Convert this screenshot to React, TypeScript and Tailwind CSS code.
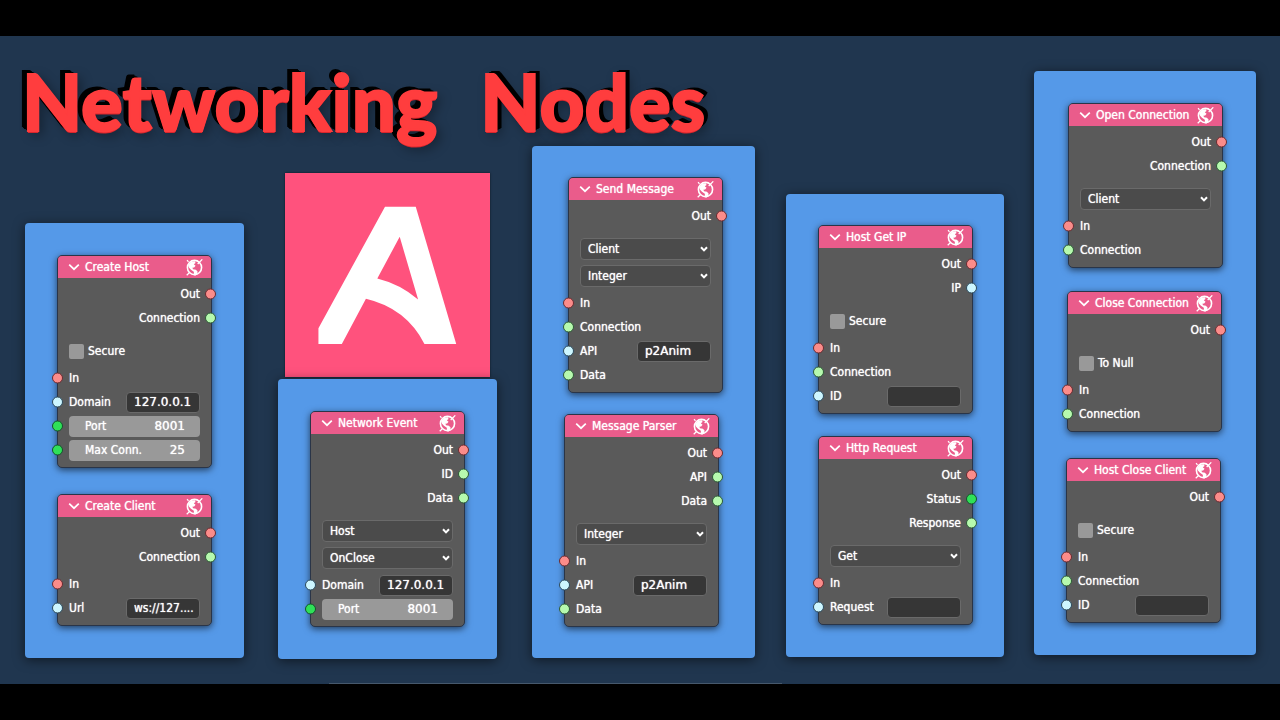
import { useId, type ReactNode } from "react";

type Tone = "flow" | "any" | "text" | "int";

const toneClass: Record<Tone, string> = {
  flow: "bg-[#fb8c8a] border-[#6b2a30]",
  any: "bg-[#b6f9ae] border-[#2c5a35]",
  text: "bg-[#cdf6ff] border-[#2c4a5c]",
  int: "bg-[#2fe058] border-[#14532b]",
};

function Socket({ tone, side }: { tone: Tone; side: "left" | "right" }) {
  const place = side === "left" ? "-left-[17px]" : "-right-4";
  return (
    <span
      className={`absolute top-1/2 size-[11px] -translate-y-1/2 rounded-full border ${place} ${toneClass[tone]}`}
    />
  );
}

function Output({ tone, children }: { tone: Tone; children: ReactNode }) {
  return (
    <li className="relative flex h-6 items-center justify-end">
      {children}
      <Socket tone={tone} side="right" />
    </li>
  );
}

function Input({ tone, children }: { tone: Tone; children: ReactNode }) {
  return (
    <li className="relative flex h-6 items-center">
      <Socket tone={tone} side="left" />
      {children}
    </li>
  );
}

function TextInput({ tone, label, value }: { tone: Tone; label: string; value: string }) {
  const id = useId();
  return (
    <li className="relative flex h-6 items-center justify-between">
      <Socket tone={tone} side="left" />
      <label htmlFor={id}>{label}</label>
      <input
        id={id}
        type="text"
        defaultValue={value}
        className={`h-[21px] w-[74px] rounded-[4px] border border-[#6a6a6a] bg-[#363636] pl-[7px] outline-none [text-shadow:inherit] ${
          value.startsWith("ws") ? "" : "font-['DejaVu_Sans',sans-serif]"
        }`}
      />
    </li>
  );
}

function NumberInput({ label, value }: { label: string; value: string }) {
  const id = useId();
  return (
    <li className="relative flex h-6 items-center">
      <Socket tone="int" side="left" />
      <span className="flex h-[21px] w-full items-center justify-between rounded-[4px] bg-[#999] pr-[15px] pl-4">
        <label htmlFor={id}>{label}</label>
        <input
          id={id}
          type="text"
          inputMode="numeric"
          defaultValue={value}
          className="w-9 bg-transparent text-right font-['DejaVu_Sans',sans-serif] outline-none [text-shadow:inherit]"
        />
      </span>
    </li>
  );
}

function Choice({ label, options }: { label: string; options: string[] }) {
  return (
    <div className="relative flex h-6 items-center">
      <select
        aria-label={label}
        className="h-[22px] w-full appearance-none rounded-[4px] border border-[#6a6a6a] bg-[#4b4b4b] pl-[7px] outline-none [text-shadow:inherit]"
      >
        {options.map((option) => (
          <option key={option}>{option}</option>
        ))}
      </select>
      <svg
        viewBox="0 0 8 6"
        className="pointer-events-none absolute right-[3px] h-[6px] w-2 fill-none stroke-white stroke-2"
      >
        <path d="M1 1.2 4 4.4 7 1.2" />
      </svg>
    </div>
  );
}

function Check({ label }: { label: string }) {
  return (
    <label className="flex h-6 items-center gap-1">
      <input type="checkbox" className="size-[15px] appearance-none rounded-[2px] bg-[#999]" />
      {label}
    </label>
  );
}

function Globe() {
  return (
    <svg viewBox="0 0 48 48" className="size-[17px] fill-none stroke-white">
      <circle cx="24" cy="24" r="20" strokeWidth="4.5" />
      <path
        fill="#fff"
        stroke="none"
        d="M6 17 14 8l11-2 2 5-5 4 5 4-4 5-5 1 2 4 8 1 5 6-2 6-5 5-3-2-1-9-8-6-6-6Z"
      />
      <path strokeWidth="3.5" d="M33 14 46 1M10 38 2 46M3 3 7 8" />
    </svg>
  );
}

interface NodeProps {
  title: string;
  place: string;
  outputs: ReactNode;
  options?: ReactNode;
  inputs?: ReactNode;
}

function Node({ title, place, outputs, options, inputs }: NodeProps) {
  return (
    <article
      className={`absolute w-[155px] rounded-[5px] border border-[#2a3548] bg-[#5a5a5a] shadow-[0_2px_7px_rgba(0,0,0,0.6)] ${place}`}
    >
      <header className="flex h-[22px] items-center rounded-t-[4px] bg-[#ea5c8b] pr-2 pl-[10px]">
        <button type="button" aria-label={`Collapse ${title}`} className="w-[17px]">
          <svg viewBox="0 0 12 8" className="h-2 w-3 fill-none stroke-white stroke-[1.7]">
            <path d="M1.2 1.6 6 6.2l4.8-4.6" />
          </svg>
        </button>
        <h2 className="flex-1 whitespace-nowrap">{title}</h2>
        <Globe />
      </header>
      <div className="px-[11px] pt-1 pb-[5px]">
        <ul>{outputs}</ul>
        {options && <div className="mt-[9px] flex flex-col gap-[3px]">{options}</div>}
        {inputs && <ul className="mt-[3px]">{inputs}</ul>}
      </div>
    </article>
  );
}

function Frame({ place }: { place: string }) {
  return (
    <div
      className={`absolute rounded-[4px] bg-[#5599e8] shadow-[0_2px_12px_rgba(0,0,0,0.55)] ${place}`}
    />
  );
}

function Logo() {
  return (
    <svg
      viewBox="0 0 613 611"
      preserveAspectRatio="none"
      role="img"
      aria-label="A"
      className="absolute top-[137px] left-[285px] h-[204px] w-[205px] bg-[#ff527d] shadow-[0_0_2px_rgba(0,0,0,0.6)]"
    >
      <path
        fill="#fff"
        fillRule="evenodd"
        d="M299 101H391L512 512H417Q362 405 242 377L170 512H100V465ZM343 191 276 316Q345 333 398 379Z"
      />
    </svg>
  );
}

export default function App() {
  return (
    <div className="flex min-h-screen flex-col bg-black py-9">
      <main className="relative min-h-[648px] flex-1 overflow-hidden bg-[#20364f] font-['DejaVu_Sans_Condensed','DejaVu_Sans',sans-serif] text-xs text-white [text-shadow:0_0_1px_#fff]">
        <h1 className="absolute top-[26px] left-[22px] flex gap-[43px] font-['Lato',sans-serif] text-[78px] leading-none font-black whitespace-nowrap text-[#ff3d3e] [-webkit-text-stroke:2px_#ff3d3e]">
          <span className="[text-shadow:0_1px_0_#e02b30,0_2px_0_#d9262c,-1px_0_0_#000,-2px_-1px_0_#000,-3px_-2px_0_#000,-4px_-2px_0_#000,-5px_-3px_0_#000,-6px_-4px_0_#000,4px_4px_12px_rgba(0,0,0,0.4)]">
            Networking
          </span>
          <span className="[text-shadow:0_1px_0_#e02b30,0_2px_0_#d9262c,1px_-1px_0_#000,2px_-1px_0_#000,3px_-2px_0_#000,4px_-2px_0_#000,5px_-3px_0_#000,4px_4px_12px_rgba(0,0,0,0.4)]">
            Nodes
          </span>
        </h1>

        <Logo />

        <Frame place="left-[25px] top-[187px] h-[435px] w-[219px]" />
        <Frame place="left-[278px] top-[343px] h-[280px] w-[219px]" />
        <Frame place="left-[532px] top-[110px] h-[512px] w-[223px]" />
        <Frame place="left-[786px] top-[158px] h-[463px] w-[218px]" />
        <Frame place="left-[1034px] top-[35px] h-[584px] w-[222px]" />

        <Node
          title="Create Host"
          place="left-[57px] top-[219px]"
          outputs={
            <>
              <Output tone="flow">Out</Output>
              <Output tone="any">Connection</Output>
            </>
          }
          options={<Check label="Secure" />}
          inputs={
            <>
              <Input tone="flow">In</Input>
              <TextInput tone="text" label="Domain" value="127.0.0.1" />
              <NumberInput label="Port" value="8001" />
              <NumberInput label="Max Conn." value="25" />
            </>
          }
        />
        <Node
          title="Create Client"
          place="left-[57px] top-[458px]"
          outputs={
            <>
              <Output tone="flow">Out</Output>
              <Output tone="any">Connection</Output>
            </>
          }
          inputs={
            <>
              <Input tone="flow">In</Input>
              <TextInput tone="text" label="Url" value="ws://127...." />
            </>
          }
        />
        <Node
          title="Network Event"
          place="left-[310px] top-[375px]"
          outputs={
            <>
              <Output tone="flow">Out</Output>
              <Output tone="any">ID</Output>
              <Output tone="any">Data</Output>
            </>
          }
          options={
            <>
              <Choice label="Side" options={["Host", "Client"]} />
              <Choice label="Event" options={["OnClose", "OnOpen"]} />
            </>
          }
          inputs={
            <>
              <TextInput tone="text" label="Domain" value="127.0.0.1" />
              <NumberInput label="Port" value="8001" />
            </>
          }
        />
        <Node
          title="Send Message"
          place="left-[568px] top-[141px]"
          outputs={<Output tone="flow">Out</Output>}
          options={
            <>
              <Choice label="Side" options={["Client", "Host"]} />
              <Choice label="Data type" options={["Integer", "Float"]} />
            </>
          }
          inputs={
            <>
              <Input tone="flow">In</Input>
              <Input tone="any">Connection</Input>
              <TextInput tone="text" label="API" value="p2Anim" />
              <Input tone="any">Data</Input>
            </>
          }
        />
        <Node
          title="Message Parser"
          place="left-[564px] top-[378px]"
          outputs={
            <>
              <Output tone="flow">Out</Output>
              <Output tone="any">API</Output>
              <Output tone="any">Data</Output>
            </>
          }
          options={<Choice label="Data type" options={["Integer", "Float"]} />}
          inputs={
            <>
              <Input tone="flow">In</Input>
              <TextInput tone="text" label="API" value="p2Anim" />
              <Input tone="any">Data</Input>
            </>
          }
        />
        <Node
          title="Host Get IP"
          place="left-[818px] top-[189px]"
          outputs={
            <>
              <Output tone="flow">Out</Output>
              <Output tone="text">IP</Output>
            </>
          }
          options={<Check label="Secure" />}
          inputs={
            <>
              <Input tone="flow">In</Input>
              <Input tone="any">Connection</Input>
              <TextInput tone="text" label="ID" value="" />
            </>
          }
        />
        <Node
          title="Http Request"
          place="left-[818px] top-[400px]"
          outputs={
            <>
              <Output tone="flow">Out</Output>
              <Output tone="int">Status</Output>
              <Output tone="any">Response</Output>
            </>
          }
          options={<Choice label="Method" options={["Get", "Post"]} />}
          inputs={
            <>
              <Input tone="flow">In</Input>
              <TextInput tone="text" label="Request" value="" />
            </>
          }
        />
        <Node
          title="Open Connection"
          place="left-[1068px] top-[67px]"
          outputs={
            <>
              <Output tone="flow">Out</Output>
              <Output tone="any">Connection</Output>
            </>
          }
          options={<Choice label="Side" options={["Client", "Host"]} />}
          inputs={
            <>
              <Input tone="flow">In</Input>
              <Input tone="any">Connection</Input>
            </>
          }
        />
        <Node
          title="Close Connection"
          place="left-[1067px] top-[255px]"
          outputs={<Output tone="flow">Out</Output>}
          options={<Check label="To Null" />}
          inputs={
            <>
              <Input tone="flow">In</Input>
              <Input tone="any">Connection</Input>
            </>
          }
        />
        <Node
          title="Host Close Client"
          place="left-[1066px] top-[422px]"
          outputs={<Output tone="flow">Out</Output>}
          options={<Check label="Secure" />}
          inputs={
            <>
              <Input tone="flow">In</Input>
              <Input tone="any">Connection</Input>
              <TextInput tone="text" label="ID" value="" />
            </>
          }
        />

        <div className="absolute bottom-0 left-[329px] h-px w-[453px] bg-[#46586c]" />
      </main>
    </div>
  );
}
